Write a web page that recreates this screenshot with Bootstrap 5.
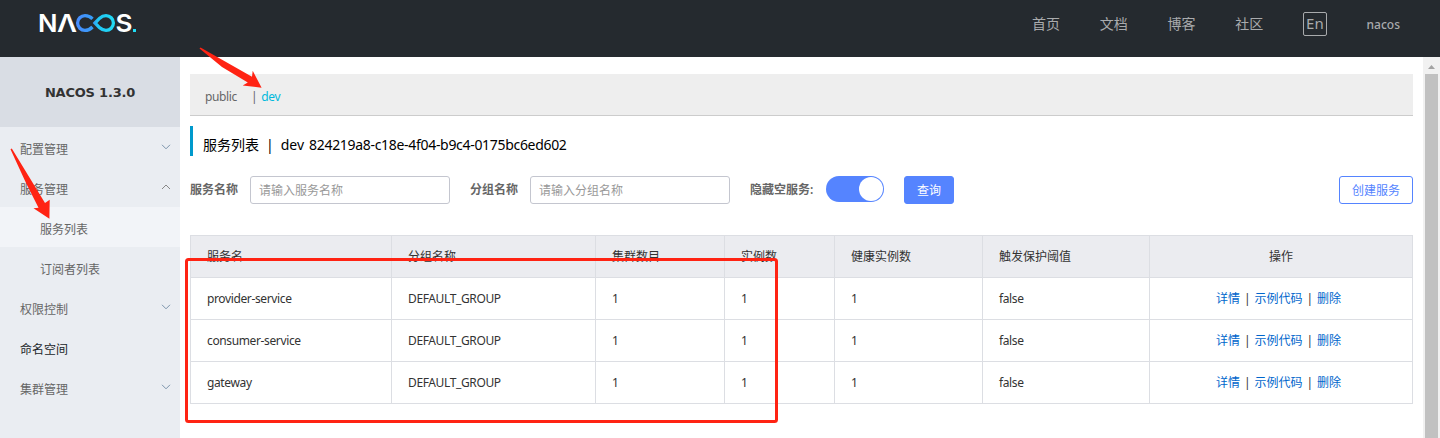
<!DOCTYPE html>
<html lang="zh-CN">
<head>
<meta charset="utf-8">
<title>Nacos</title>
<link href="https://cdn.jsdelivr.net/npm/bootstrap@5.3.0/dist/css/bootstrap.min.css" rel="stylesheet">
<style>
body{font:12px/20px "Noto Sans","Noto Sans CJK SC",sans-serif;color:#333;height:438px;overflow:hidden}
.lat{letter-spacing:-.37px}
.topbar{height:57px;background:#252a2f;padding-left:36px;padding-right:40px;color:#a9abad;font-size:14px}
.topbar .nav-link{color:inherit;padding:0;line-height:20px}
.topbar .nav{gap:39.7px;margin-top:14px}
.topbar .user-link{font-size:12px;font-weight:500;line-height:22px}
.lang-btn{width:24px;height:24px;border:1px solid #a9abad;border-radius:2px;font-size:15px;line-height:20px;margin-top:-2px}
.shell{height:381px}
.side{width:180px;background:#eaedf2;color:#666}
.side-title{height:70px;background:#d9dde4;color:#333;font:bold 13px "DejaVu Sans","Noto Sans",sans-serif;letter-spacing:-.2px}
.side-item{height:40px;padding:6px 9px 0 20px}
.side-item svg{margin-top:-7px}
.side-sub{padding-left:40px}
.side-item.current{background:#f2f4f8}
.work{padding:17px 10px 0}
.ns-bar{height:42px;background:#eee;border-bottom:1px solid #ccc;padding:5px 15px 0;color:#666}
.ns-name{width:46px}
.ns-on{color:#00b9dc;margin-left:4px}
.page-head{height:30px;border-left:3px solid #09c;margin-top:10px;padding:7px 0 0 10px;font-size:14px;line-height:24px;color:#000;gap:7px}
.page-head .lat{margin-left:-2px;letter-spacing:-.31px}
.filters{margin-top:20px;height:28px}
.filters label{font-weight:600;color:#666}
.filters .lbl{width:60px}
.filters .lbl-wide{width:76px}
.filters .gap-before{margin-left:20px}
.filters .form-control{width:200px;height:28px;border:1px solid #c4c6cf;border-radius:3px;font-size:12px;padding:1px 8px 0;line-height:20px;color:#333}
.filters .form-control::placeholder{color:#999;opacity:1}
.toggle{width:58px;height:26px;border-radius:13px;background:#5584ff;padding:1px;margin-bottom:2px}
.toggle i{width:24px;height:24px;border-radius:50%;background:#fff}
.filters .btn{height:28px;font-size:12px;line-height:20px;padding:3px 12px 1px;border-radius:3px}
.btn-find{background:#5584ff;color:#fff;border:1px solid #5584ff}
.btn-new{border:1px solid #5584ff;color:#5584ff;background:#fff}
.svc{table-layout:fixed;border-collapse:collapse;width:1223px;margin-top:31px}
.svc th,.svc td{border:1px solid #dcdee3;height:42px;padding:1px 16px 0;font-weight:400;line-height:20px}
.svc th{background:#ebecf0}
.svc a{color:#06c;text-decoration:none}
.acts{letter-spacing:0;margin-right:5px}
.acts i{font-style:normal;width:14.5px;text-align:center}
.rail{width:17px;background:#f1f1f1}
.rail div{width:13px;background:#c1c1c1;margin-top:5px}
.notes{left:0;top:0;pointer-events:none}
</style>
<script src="https://cdn.jsdelivr.net/npm/bootstrap@5.3.0/dist/js/bootstrap.bundle.min.js"></script>
</head>
<body class="position-relative">
<header class="topbar d-flex justify-content-between align-items-start">
  <svg width="104" height="46" viewBox="36 0 104 46">
    <defs><linearGradient id="inf" gradientUnits="userSpaceOnUse" x1="76" x2="115" y1="0" y2="0"><stop offset="0" stop-color="#4a8cff"/><stop offset=".45" stop-color="#359df5"/><stop offset=".55" stop-color="#22c5f5"/><stop offset="1" stop-color="#20dcf5"/></linearGradient></defs>
    <g font-family="Inter" font-weight="600" font-size="24.5" fill="#fff">
      <text x="38" y="32" textLength="19.5" lengthAdjust="spacingAndGlyphs">N</text>
      <text x="57" y="32" textLength="20" lengthAdjust="spacingAndGlyphs">Λ</text>
      <text x="115.5" y="32" textLength="17" lengthAdjust="spacingAndGlyphs">S</text>
    </g>
    <path d="M92.5 18.8C90.2 16.4 87.5 15.6 85 15.6A7.4 7.4 0 0 0 85 30.4C87.5 30.4 90.2 29.4 92.5 27M95 23L99.7 18.2C101.5 16.5 103.5 15.6 106 15.6A7.4 7.4 0 0 1 106 30.4C103.5 30.4 101.5 29.5 99.7 27.8Z" fill="none" stroke="url(#inf)" stroke-width="3.3"/>
    <rect x="133" y="29" width="3" height="3" fill="#20dcf5"/>
  </svg>
  <nav class="nav align-items-start flex-nowrap">
    <a class="nav-link" href="#">首页</a><a class="nav-link" href="#">文档</a><a class="nav-link" href="#">博客</a><a class="nav-link" href="#">社区</a>
    <span class="lang-btn text-center">En</span>
    <a class="nav-link user-link" href="#">nacos</a>
  </nav>
</header>
<div class="shell d-flex">
  <aside class="side flex-shrink-0">
    <div class="side-title d-flex align-items-center justify-content-center">NACOS 1.3.0</div>
    <div class="side-item d-flex justify-content-between align-items-center">配置管理<svg width="10" height="6"><path d="M1 .8l4 4 4-4" fill="none" stroke="#7b93ab"/></svg></div>
    <div class="side-item d-flex justify-content-between align-items-center">服务管理<svg width="10" height="6"><path d="M1 5l4-4 4 4" fill="none" stroke="#888"/></svg></div>
    <div class="side-item side-sub current d-flex align-items-center">服务列表</div>
    <div class="side-item side-sub d-flex align-items-center">订阅者列表</div>
    <div class="side-item d-flex justify-content-between align-items-center">权限控制<svg width="10" height="6"><path d="M1 .8l4 4 4-4" fill="none" stroke="#7b93ab"/></svg></div>
    <div class="side-item d-flex align-items-center text-dark">命名空间</div>
    <div class="side-item d-flex justify-content-between align-items-center">集群管理<svg width="10" height="6"><path d="M1 .8l4 4 4-4" fill="none" stroke="#7b93ab"/></svg></div>
  </aside>
  <main class="work flex-grow-1 bg-white">
    <div class="ns-bar d-flex align-items-center lat"><span class="ns-name">public</span><span>|</span><span class="ns-on">dev</span></div>
    <div class="page-head d-flex"><span>服务列表</span><span>|</span><span>dev</span><span class="lat">824219a8-c18e-4f04-b9c4-0175bc6ed602</span></div>
    <div class="filters d-flex align-items-center">
      <label class="lbl">服务名称</label><input class="form-control" placeholder="请输入服务名称">
      <label class="lbl gap-before">分组名称</label><input class="form-control" placeholder="请输入分组名称">
      <label class="lbl-wide gap-before">隐藏空服务:</label>
      <span class="toggle d-flex justify-content-end"><i></i></span>
      <button class="btn btn-find gap-before">查询</button>
      <button class="btn btn-new ms-auto">创建服务</button>
    </div>
    <table class="svc">
      <colgroup><col style="width:201px"><col style="width:204px"><col style="width:129px"><col style="width:110px"><col style="width:148px"><col style="width:167px"><col></colgroup>
      <thead><tr><th>服务名</th><th>分组名称</th><th>集群数目</th><th>实例数</th><th>健康实例数</th><th>触发保护阈值</th><th class="text-center">操作</th></tr></thead>
      <tbody class="lat">
        <tr><td>provider-service</td><td>DEFAULT_GROUP</td><td>1</td><td>1</td><td>1</td><td>false</td><td><div class="acts d-flex justify-content-center"><a href="#">详情</a><i>|</i><a href="#">示例代码</a><i>|</i><a href="#">删除</a></div></td></tr>
        <tr><td>consumer-service</td><td>DEFAULT_GROUP</td><td>1</td><td>1</td><td>1</td><td>false</td><td><div class="acts d-flex justify-content-center"><a href="#">详情</a><i>|</i><a href="#">示例代码</a><i>|</i><a href="#">删除</a></div></td></tr>
        <tr><td>gateway</td><td>DEFAULT_GROUP</td><td>1</td><td>1</td><td>1</td><td>false</td><td><div class="acts d-flex justify-content-center"><a href="#">详情</a><i>|</i><a href="#">示例代码</a><i>|</i><a href="#">删除</a></div></td></tr>
      </tbody>
    </table>
  </main>
  <div class="rail flex-shrink-0 d-flex flex-column align-items-center">
    <svg class="mt-2" width="7" height="4"><path d="M0 4L3.5 0 7 4z" fill="#a3a3a3"/></svg>
    <div class="flex-grow-1"></div>
  </div>
</div>
<!-- hand-drawn annotations lying over the page -->
<svg class="notes position-absolute" width="1440" height="438">
  <g fill="#ff2313">
    <path d="M199.5 48.5L200.5 47.6 252 76.8 252.7 70.8 261.6 87.8 242.7 85.4 247.8 82.5 222 67z"/>
    <path d="M10.5 149.2L11.8 148.6 45 203 49.7 199.8 49.4 218.8 33.5 208.3 38.5 207.7 26 183z"/>
  </g>
  <rect x="186.5" y="259.5" width="590" height="162" rx="2" fill="none" stroke="#ff2313" stroke-width="3"/>
</svg>
</body>
</html>
